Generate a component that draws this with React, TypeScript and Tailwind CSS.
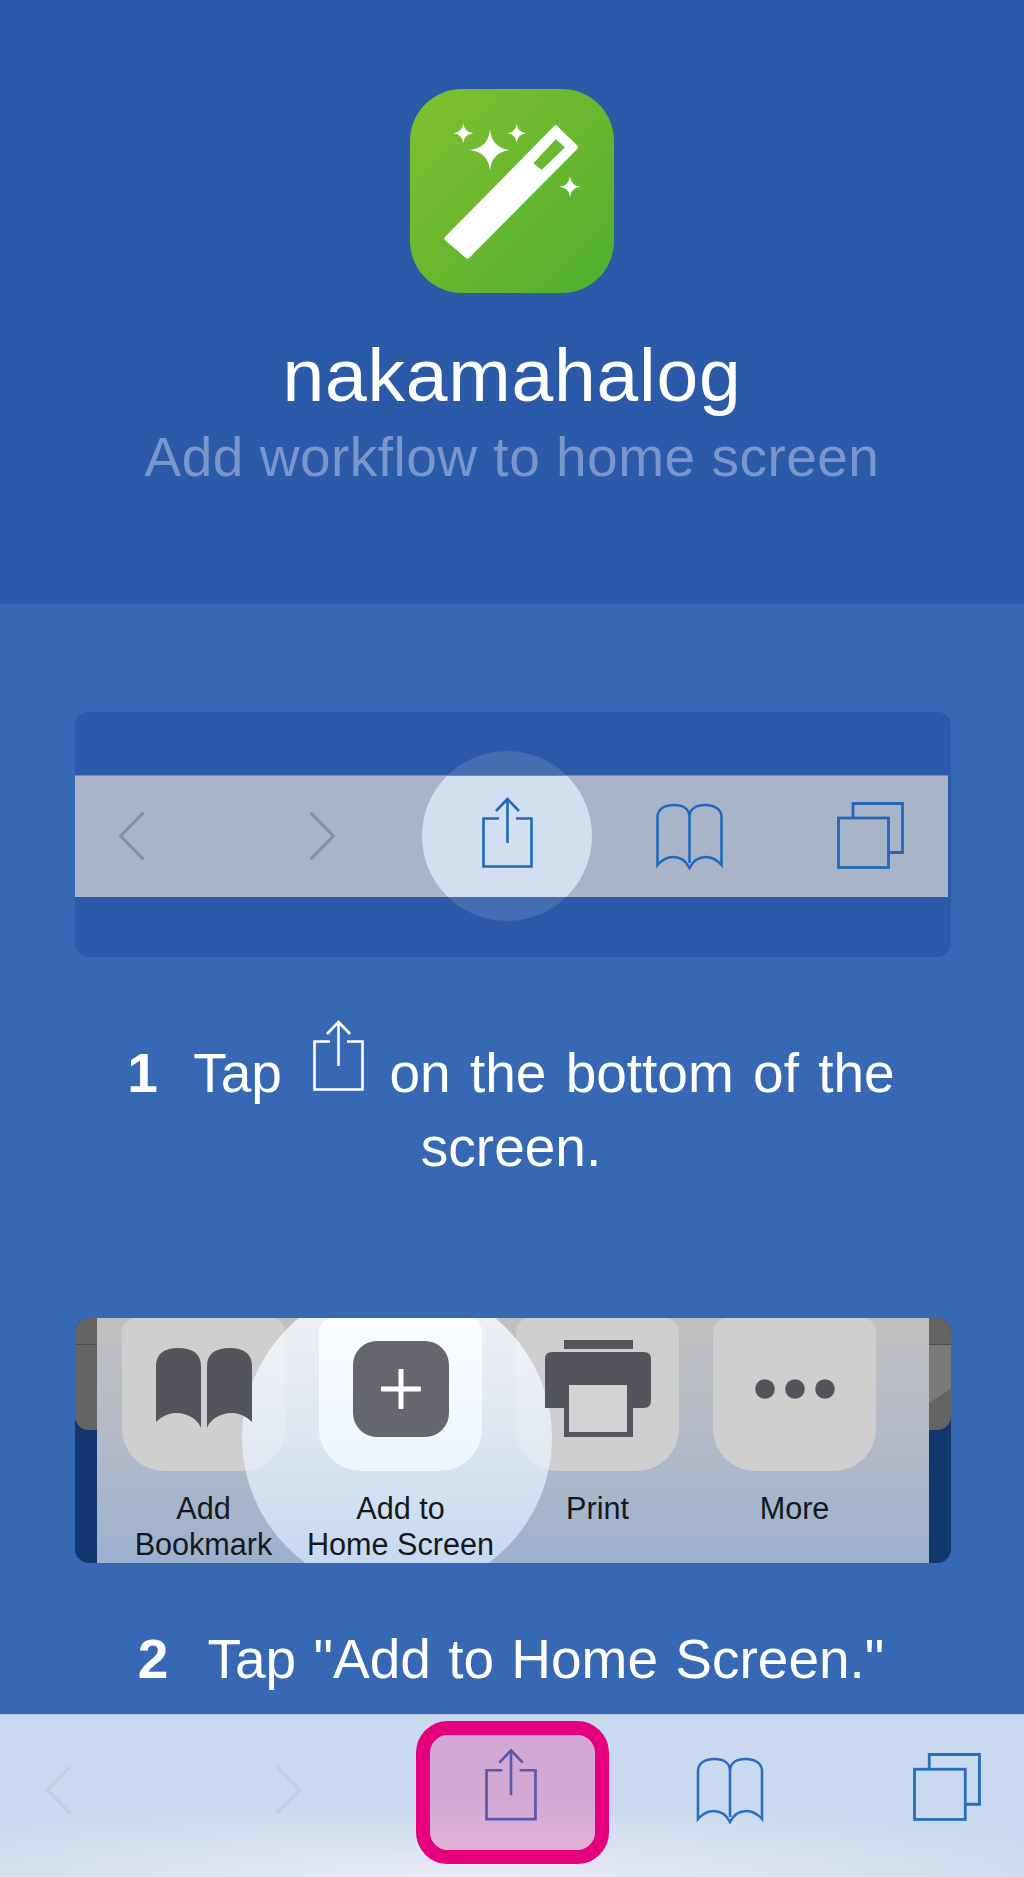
const star = (x: number, y: number, a: number) => {
  const b = a * 0.09;
  return `M${x} ${y - a}Q${x + b} ${y - b} ${x + a} ${y}Q${x + b} ${y + b} ${x} ${y + a}Q${x - b} ${y + b} ${x - a} ${y}Q${x - b} ${y - b} ${x} ${y - a}Z`;
};

type IconProps = { className?: string };

function WandIcon() {
  return (
    <div className="h-[204px] w-[204px] rounded-[52px] bg-linear-to-br from-[#7fc12e] to-[#4fae2f]">
      <svg viewBox="0 0 204 204" className="h-full w-full" fill="#fff">
        <path
          fill="none"
          stroke="#fff"
          strokeWidth="5"
          strokeLinejoin="round"
          d="M37 149.5L57.5 167L165.5 58.3L145.7 39Z"
        />
        <path
          fillRule="evenodd"
          d="M37 149.5L57.5 167L165.5 58.3L145.7 39ZM123.3 74.3L145.7 50.3L155 58.3L131.7 81Z"
        />
        <path d={star(80, 61, 20.5)} />
        <path d={star(53.3, 44.3, 10)} />
        <path d={star(106.7, 44.3, 9.5)} />
        <path d={star(160, 97.7, 10.5)} />
      </svg>
    </div>
  );
}

function ChevronLeft({ className }: IconProps) {
  return (
    <svg viewBox="0 0 25 48" className={className} fill="none" stroke="currentColor" strokeWidth="3">
      <path d="M24.5 0.5L1.5 24L24.5 47.5" />
    </svg>
  );
}

function ChevronRight({ className }: IconProps) {
  return (
    <svg viewBox="0 0 25 48" className={className} fill="none" stroke="currentColor" strokeWidth="3">
      <path d="M0.5 0.5L23.5 24L0.5 47.5" />
    </svg>
  );
}

function ShareIcon({ className }: IconProps) {
  return (
    <svg viewBox="0 0 51 71" className={className} fill="none" stroke="currentColor" strokeWidth="2.6">
      <path d="M17 21.5H1.5V69.5H49.5V21.5H34" />
      <path d="M25.5 2V46" />
      <path d="M14 14L25.5 2L37 14" />
    </svg>
  );
}

function BookIcon({ className }: IconProps) {
  return (
    <svg viewBox="0 0 67 67" className={className} fill="none" stroke="currentColor" strokeWidth="2.6">
      <path d="M33.5 60V14C33.5 6 27 2 18 2C9 2 1.5 6 1.5 14V62C6 57 11 54 17 54C25 54 30 58 33.5 65C37 58 42 54 50 54C56 54 61 57 65.5 62V14C65.5 6 58 2 49 2C40 2 33.5 6 33.5 14" />
    </svg>
  );
}

function TabsIcon({ className }: IconProps) {
  return (
    <svg viewBox="0 0 67 67" className={className} fill="none" stroke="currentColor" strokeWidth="2.8">
      <rect x="1.5" y="16" width="50" height="49.5" />
      <path d="M16 15V1.5H65.5V50.5H52" />
    </svg>
  );
}

function SolidBook() {
  return (
    <svg viewBox="0 0 96 80" className="relative z-20 h-[80px] w-[96px]" fill="#54545c">
      <path d="M45 80C42 72 33 65 20 65C12 65 5 69 0 74V18C0 6 8 0 22 0C37 0 45 6 45 18Z" />
      <path d="M51 80C54 72 63 65 76 65C84 65 91 69 96 74V18C96 6 88 0 74 0C59 0 51 6 51 18Z" />
    </svg>
  );
}

function PlusTile() {
  return (
    <div className="relative z-20 flex h-[96px] w-[96px] items-center justify-center rounded-[24px] bg-[#66666d]">
      <svg viewBox="0 0 40 40" className="h-[40px] w-[40px]" fill="#fff">
        <rect x="17.5" y="0" width="5" height="40" rx="1" />
        <rect x="0" y="17.5" width="40" height="5" rx="1" />
      </svg>
    </div>
  );
}

function PrinterIcon() {
  return (
    <svg viewBox="0 0 106 97" className="relative z-20 h-[97px] w-[106px]">
      <rect x="19" y="0" width="69" height="9" fill="#54545c" />
      <path d="M7 12H99Q106 12 106 19V60Q106 68 99 68H0V19Q0 12 7 12Z" fill="#54545c" />
      <rect x="19" y="41" width="69" height="56" fill="#54545c" />
      <rect x="24" y="45" width="58" height="47" fill="#d3d3d3" />
    </svg>
  );
}

function Dots() {
  return (
    <svg viewBox="0 0 80 20" className="relative z-20 h-[20px] w-[80px]" fill="#54545c">
      <circle cx="10" cy="10" r="9.8" />
      <circle cx="40" cy="10" r="9.8" />
      <circle cx="70" cy="10" r="9.8" />
    </svg>
  );
}

const actions = [
  { label: ['Add', 'Bookmark'], pad: 'pt-[30px]', tile: 'bg-[#cfcfcf]', icon: <SolidBook /> },
  { label: ['Add to', 'Home Screen'], pad: 'pt-[23px]', tile: 'bg-white', icon: <PlusTile /> },
  { label: ['Print', ''], pad: 'pt-[22px]', tile: 'bg-[#cfcfcf]', icon: <PrinterIcon /> },
  { label: ['More', ''], pad: 'pt-[61px]', tile: 'bg-[#cfcfcf]', icon: <Dots /> },
];

export default function App() {
  return (
    <div className="flex h-[1877px] w-full flex-col overflow-hidden bg-[#3668b4] font-['Liberation_Sans',Arial,sans-serif] text-white">
      <header className="flex h-[604px] flex-col items-center bg-[#2b5aa8] pt-[89px]">
        <WandIcon />
        <h1 className="mt-[37px] text-[75px] leading-[90px] tracking-[0.8px]">nakamahalog</h1>
        <p className="mt-0 text-[55px] leading-[74px] tracking-[0.5px] text-[#7b96cb]">Add workflow to home screen</p>
      </header>

      <section className="flex flex-col pl-[75px] pr-[73px]">
        <div className="relative mt-[108px] h-[245px] overflow-hidden rounded-[14px] bg-[#2b5aa8]">
          <div className="absolute left-[347px] top-[39px] h-[170px] w-[170px] rounded-full bg-white/12" />
          <div className="relative mr-[3px] mt-[63px] flex h-[122px] items-start overflow-hidden border-t border-[#7d88a6] bg-[#a9b4c8] text-[#2169b8]">
            <div className="absolute left-[347px] top-[-25px] h-[170px] w-[170px] rounded-full bg-[#d2dff0]" />
            <ChevronLeft className="ml-[44px] mt-[36px] h-[48px] w-[25px] text-[#868e9f]" />
            <ChevronRight className="ml-[166px] mt-[36px] h-[48px] w-[25px] text-[#868e9f]" />
            <ShareIcon className="relative ml-[147px] mt-[21px] h-[71px] w-[51px]" />
            <BookIcon className="ml-[123px] mt-[27px] h-[67px] w-[67px]" />
            <TabsIcon className="ml-[114px] mt-[26px] h-[67px] w-[67px]" />
          </div>
        </div>

        <p className="mt-[79px] pr-[4px] text-center text-[55px] leading-[74px] [word-spacing:4px]">
          <b className="mr-[17px]">1</b> Tap{' '}
          <ShareIcon className="ml-[12px] mr-[6px] mt-[-30px] inline-block h-[73px] w-[51px] align-baseline" /> on the
          bottom of the screen.
        </p>

        <div className="relative mt-[134px] h-[245px] overflow-hidden rounded-[14px] bg-[#12376f]">
          <div className="absolute inset-x-0 top-0 h-[112px] rounded-b-[14px] bg-[#646464]" />
          <div className="absolute inset-x-0 top-[26px] h-px bg-[#4f4f4f]" />
          <div className="absolute right-0 top-[27px] h-[58px] w-[22px] bg-[#7a7a7a] [clip-path:polygon(0_0,100%_0,100%_75%,0_100%)]" />
          <div className="relative mx-[22px] flex h-full gap-[34px] bg-linear-to-b from-[#c0c0c0] via-[#b3bac8] to-[#9bb1cf] pl-[25px] text-black">
            <div className="absolute left-[145px] top-[-35px] h-[310px] w-[310px] rounded-full bg-linear-to-b from-white/80 to-[#d3e7ff]/70" />
            {actions.map((a) => (
              <div key={a.label[0]} className="flex w-[163px] flex-col items-center">
                <div
                  className={`flex h-[153px] w-full shrink-0 justify-center rounded-t-[14px] rounded-b-[42px] ${a.pad} ${a.tile}`}
                >
                  {a.icon}
                </div>
                <div className="relative z-20 mt-[19px] whitespace-nowrap text-center text-[30.6px] leading-[36px] text-[#16181d]">
                  {a.label[0]}
                  <br />
                  {a.label[1]}
                </div>
              </div>
            ))}
          </div>
        </div>

        <p className="mt-[59px] pr-[4px] text-center text-[55px] leading-[74px] [word-spacing:2px]">
          <b className="mr-[23px]">2</b> Tap "Add to Home Screen."
        </p>
      </section>

      <footer className="relative mt-auto flex h-[163px] shrink-0 items-start border-t border-[#b7c8e2] bg-[radial-gradient(ellipse_70%_45%_at_45%_100%,#e8ebf5,#c9d9ef)] text-[#2a6fbe]">
        <ChevronLeft className="ml-[46px] mt-[51px] h-[48px] w-[25px] text-[#c1cde2]" />
        <ChevronRight className="ml-[205px] mt-[51px] h-[48px] w-[25px] text-[#c1cde2]" />
        <ShareIcon className="ml-[184px] mt-[33px] h-[73px] w-[52px]" />
        <BookIcon className="ml-[159px] mt-[42px] h-[67px] w-[68px]" />
        <TabsIcon className="ml-[149px] mt-[38px] h-[68px] w-[68px]" />
        <div className="absolute left-[416px] top-[6px] h-[143px] w-[193px] rounded-[32px] border-[14px] border-[#e6007e] bg-[#f50070]/22 bg-clip-padding" />
      </footer>
    </div>
  );
}
